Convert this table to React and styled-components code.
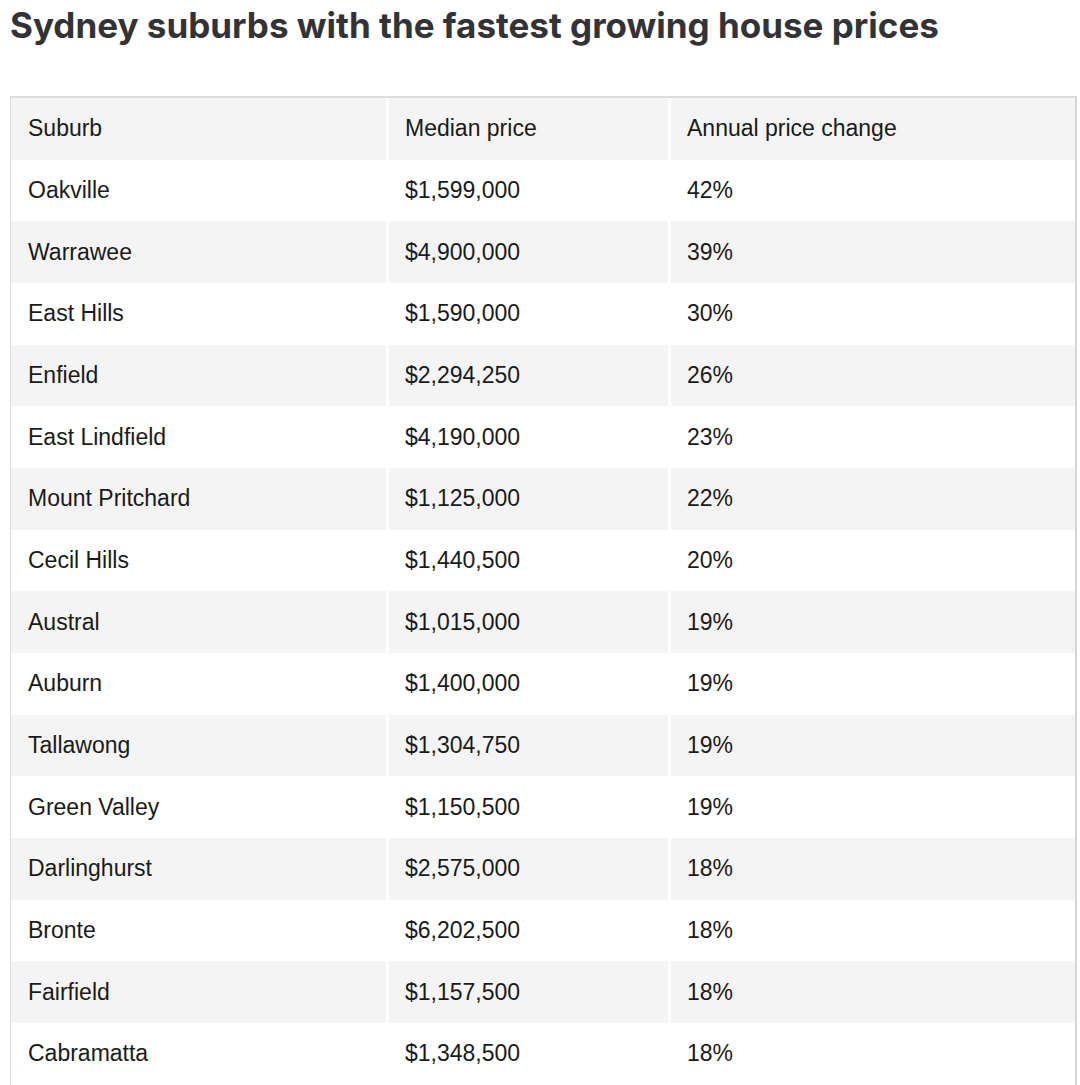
import React from "react";
import styled, { createGlobalStyle } from "styled-components";

const Global = createGlobalStyle`
  html, body { margin: 0; padding: 0; background: #ffffff; }
  body { font-family: "Liberation Sans", Arial, sans-serif; }
`;

const Page = styled.div`
  padding: 5px 3px 0 10px;
`;

const Title = styled.h1`
  margin: 0 0 51px 0;
  font-family: Inter, "Noto Sans", sans-serif;
  font-weight: 700;
  font-size: 35px;
  line-height: 40px;
  letter-spacing: 0;
  color: #333336;
`;

const Table = styled.table`
  width: 1067px;
  border-collapse: separate;
  border-spacing: 0;
  border-top: 2px solid #dcdcdc;
  border-left: 1px solid #dcdcdc;
  border-right: 2px solid #d6d6d6;
  table-layout: fixed;
`;

const Cell = styled.td`
  height: 61.67px;
  box-sizing: border-box;
  padding: 0 16px 0 ${(p) => (p.$first ? 17 : 16)}px;
  border-left: ${(p) => (p.$first ? "0" : "3px solid #ffffff")};
  background: ${(p) => (p.$shade ? "#f4f4f4" : "#ffffff")};
  font-family: "Liberation Sans", Arial, sans-serif;
  font-size: 23px;
  font-weight: 400;
  color: #1a1a1a;
  text-align: left;
  vertical-align: middle;
  white-space: nowrap;
`;

const rows = [
  ["Oakville", "$1,599,000", "42%"],
  ["Warrawee", "$4,900,000", "39%"],
  ["East Hills", "$1,590,000", "30%"],
  ["Enfield", "$2,294,250", "26%"],
  ["East Lindfield", "$4,190,000", "23%"],
  ["Mount Pritchard", "$1,125,000", "22%"],
  ["Cecil Hills", "$1,440,500", "20%"],
  ["Austral", "$1,015,000", "19%"],
  ["Auburn", "$1,400,000", "19%"],
  ["Tallawong", "$1,304,750", "19%"],
  ["Green Valley", "$1,150,500", "19%"],
  ["Darlinghurst", "$2,575,000", "18%"],
  ["Bronte", "$6,202,500", "18%"],
  ["Fairfield", "$1,157,500", "18%"],
  ["Cabramatta", "$1,348,500", "18%"],
];

export default function App() {
  return (
    <Page>
      <Global />
      <Title>Sydney suburbs with the fastest growing house prices</Title>
      <Table>
        <colgroup>
          <col style={{ width: "375px" }} />
          <col style={{ width: "282px" }} />
          <col style={{ width: "407px" }} />
        </colgroup>
        <thead>
          <tr>
            <Cell as="th" $first $shade>Suburb</Cell>
            <Cell as="th" $shade>Median price</Cell>
            <Cell as="th" $shade>Annual price change</Cell>
          </tr>
        </thead>
        <tbody>
          {rows.map((r, i) => (
            <tr key={r[0]}>
              <Cell $first $shade={i % 2 === 1}>{r[0]}</Cell>
              <Cell $shade={i % 2 === 1}>{r[1]}</Cell>
              <Cell $shade={i % 2 === 1}>{r[2]}</Cell>
            </tr>
          ))}
        </tbody>
      </Table>
    </Page>
  );
}
